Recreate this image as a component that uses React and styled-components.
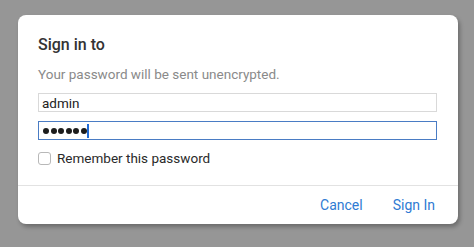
import React from "react";
import styled, { createGlobalStyle } from "styled-components";

const GlobalStyle = createGlobalStyle`
  html, body {
    margin: 0;
    padding: 0;
    background: #969696;
    font-family: Roboto, "Liberation Sans", Arial, sans-serif;
  }
`;

const Page = styled.div`
  width: 474px;
  height: 247px;
  box-sizing: border-box;
  padding: 15px 0 0 18px;
`;

const Dialog = styled.div`
  width: 440px;
  height: 209px;
  display: flex;
  flex-direction: column;
  background: #ffffff;
  border-radius: 8px;
  box-shadow: 2px 3px 4px rgba(0, 0, 0, 0.28);
  overflow: hidden;
`;

const Body = styled.div`
  flex: 1;
  display: flex;
  flex-direction: column;
  padding: 21px 21px 0 20px;
`;

const Title = styled.div`
  font-size: 16px;
  font-weight: 500;
  line-height: 18px;
  color: #333333;
`;

const Subtitle = styled.div`
  margin-top: 12px;
  font-size: 13.5px;
  line-height: 16px;
  color: #8a8a8a;
`;

const Field = styled.div`
  height: 19px;
  box-sizing: border-box;
  display: flex;
  align-items: center;
  padding-left: 3px;
  margin-top: ${(p) => p.$gap}px;
  border: 1px solid ${(p) => (p.$focused ? "#4a7cc4" : "#d9d9d9")};
  font-size: 13.5px;
  color: #222222;
`;

const Dots = styled.div`
  display: flex;
  align-items: center;
  gap: 1.5px;
  padding-left: 1px;
`;

const Dot = styled.span`
  width: 6px;
  height: 6px;
  border-radius: 50%;
  background: #1c1c1c;
`;

const Caret = styled.span`
  width: 2px;
  height: 14px;
  margin-left: 0.5px;
  background: #1f6bd8;
`;

const CheckRow = styled.label`
  display: flex;
  align-items: center;
  gap: 6px;
  margin-top: 10px;
  line-height: 16px;
  font-size: 13.5px;
  color: #2a2a2a;
`;

const Box = styled.span`
  width: 13px;
  height: 13px;
  box-sizing: border-box;
  border: 1px solid #b8b8b8;
  border-radius: 3px;
  background: #ffffff;
`;

const Footer = styled.div`
  height: 38px;
  border-top: 1px solid #e2e2e2;
  display: flex;
  align-items: center;
  justify-content: flex-end;
  gap: 30px;
  padding-right: 23px;
`;

const Action = styled.button`
  border: none;
  background: none;
  padding: 0;
  font-family: inherit;
  font-size: 14px;
  color: #2f7bd3;
  cursor: pointer;
`;

export default function App() {
  return (
    <>
      <GlobalStyle />
      <Page>
        <Dialog>
          <Body>
            <Title>Sign in to</Title>
            <Subtitle>Your password will be sent unencrypted.</Subtitle>
            <Field $gap={11}>admin</Field>
            <Field $gap={9} $focused>
              <Dots>
                {[0, 1, 2, 3, 4, 5].map((i) => (
                  <Dot key={i} />
                ))}
              </Dots>
              <Caret />
            </Field>
            <CheckRow>
              <Box />
              Remember this password
            </CheckRow>
          </Body>
          <Footer>
            <Action>Cancel</Action>
            <Action>Sign In</Action>
          </Footer>
        </Dialog>
      </Page>
    </>
  );
}
